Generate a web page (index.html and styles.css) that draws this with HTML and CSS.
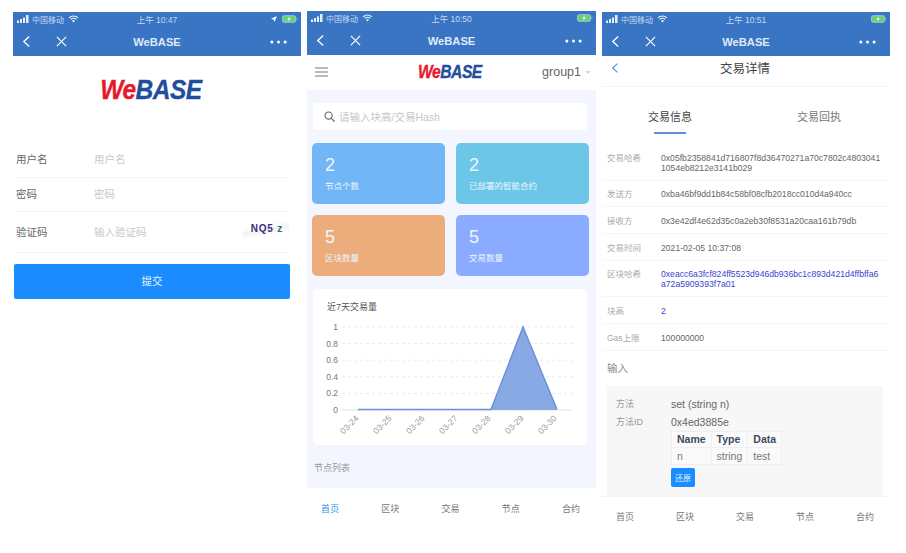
FILE: index.html
```html
<!DOCTYPE html>
<html lang="zh-CN">
<head>
  <meta charset="UTF-8">
  <meta name="viewport" content="width=device-width, initial-scale=1.0">
  <title>WeBASE</title>
  <link rel="stylesheet" href="styles.css">
</head>
<body>
  <svg class="sprite" width="0" height="0">
    <symbol id="signal" viewBox="0 0 13 8"><path d="M0 5.5h2V8H0zM3 4h2v4H3zM6 2.500h2V8H6zM9 0h2.500v8H9z" fill="currentColor"/></symbol>
    <symbol id="wifi" viewBox="0 0 12 9"><path d="M1 3.200a7 7 0 0 1 10 0M2.800 5a4.400 4.400 0 0 1 6.400 0" fill="none" stroke="currentColor" stroke-width="1.300"/><path d="M4.400 6.500a2.200 2.200 0 0 1 3.200 0L6 8.500z" fill="currentColor"/></symbol>
    <symbol id="battery" viewBox="0 0 17 8"><rect x=".5" y=".5" width="14" height="7" rx="2" fill="#62d46f" stroke="#a9c6ea"/><path d="M15.500 3v2a1 1 0 0 0 1-1 1 1 0 0 0-1-1z" fill="#a9c6ea"/><path d="M8.500 1 5.500 4.500h2L6.500 7l3-3.500h-2z" fill="#fff"/></symbol>
    <symbol id="back" viewBox="0 0 10 14"><path d="M8 1.500 2 7l6 5.500" fill="none" stroke="currentColor" stroke-width="1.500"/></symbol>
    <symbol id="close" viewBox="0 0 12 12"><path d="m1 1 10 10M11 1 1 11" fill="none" stroke="currentColor" stroke-width="1.300"/></symbol>
    <symbol id="more" viewBox="0 0 18 4"><circle cx="2" cy="2" r="1.600" fill="currentColor"/><circle cx="9" cy="2" r="1.600" fill="currentColor"/><circle cx="16" cy="2" r="1.600" fill="currentColor"/></symbol>
  </svg>

  <div class="screens">

    <!-- login -->
    <section class="phone phone_low">
      <header class="wx_head">
        <div class="status">
          <svg class="ic_signal"><use href="#signal"/></svg>
          <span class="carrier">中国移动</span>
          <svg class="ic_wifi"><use href="#wifi"/></svg>
          <span class="time">上午 10:47</span>
          <svg class="ic_gps" viewBox="0 0 8 8"><path d="M8 0 0 3.500l3.500 1L4.500 8z" fill="currentColor"/></svg>
          <svg class="ic_battery"><use href="#battery"/></svg>
        </div>
        <div class="wx_nav">
          <svg class="ic_back"><use href="#back"/></svg>
          <svg class="ic_close"><use href="#close"/></svg>
          <span class="wx_title">WeBASE</span>
          <svg class="ic_more"><use href="#more"/></svg>
        </div>
      </header>
      <div class="login_logo"><span class="logo logo_big"><b>We</b>BASE</span></div>
      <div class="login_form">
        <div class="field field_name"><span class="field_label">用户名</span><span class="field_hint">用户名</span></div>
        <div class="field field_pass"><span class="field_label">密码</span><span class="field_hint">密码</span></div>
        <div class="field field_code"><span class="field_label">验证码</span><span class="field_hint">输入验证码</span><span class="captcha">NQ5 <i>z</i></span></div>
      </div>
      <button class="submit">提交</button>
    </section>

    <!-- home -->
    <section class="phone">
      <header class="wx_head">
        <div class="status">
          <svg class="ic_signal"><use href="#signal"/></svg>
          <span class="carrier">中国移动</span>
          <svg class="ic_wifi"><use href="#wifi"/></svg>
          <span class="time">上午 10:50</span>
          <svg class="ic_battery"><use href="#battery"/></svg>
        </div>
        <div class="wx_nav">
          <svg class="ic_back"><use href="#back"/></svg>
          <svg class="ic_close"><use href="#close"/></svg>
          <span class="wx_title">WeBASE</span>
          <svg class="ic_more"><use href="#more"/></svg>
        </div>
      </header>
      <div class="toolbar">
        <svg class="ic_menu" viewBox="0 0 13 10"><path d="M0 1h13M0 5h13M0 9h13" stroke="#777" stroke-width="1.100"/></svg>
        <span class="logo logo_small"><b>We</b>BASE</span>
        <span class="group">group1</span>
        <span class="caret"></span>
      </div>
      <div class="home">
        <div class="search">
          <svg class="ic_search" viewBox="0 0 12 12"><circle cx="5" cy="5" r="3.900" fill="none" stroke="#666" stroke-width="1.200"/><path d="m8 8 3.500 3.500" stroke="#666" stroke-width="1.300"/></svg>
          <span>请输入块高/交易Hash</span>
        </div>
        <div class="stats">
          <div class="stat stat_blue"><strong>2</strong><span>节点个数</span></div>
          <div class="stat stat_cyan"><strong>2</strong><span>已部署的智能合约</span></div>
          <div class="stat stat_orange"><strong>5</strong><span>区块数量</span></div>
          <div class="stat stat_violet"><strong>5</strong><span>交易数量</span></div>
        </div>
        <div class="chart_card">
          <h3>近7天交易量</h3>
          <svg class="chart" viewBox="0 0 274 126" width="274" height="126">
            <g class="grid">
              <path d="M29 8h231M29 24.600h231M29 41.200h231M29 57.800h231M29 74.400h231"/>
            </g>
            <path class="axis" d="M29 91h231"/>
            <g class="y_labels">
              <text x="25" y="11">1</text>
              <text x="25" y="27.600">0.8</text>
              <text x="25" y="44.200">0.6</text>
              <text x="25" y="60.800">0.4</text>
              <text x="25" y="77.400">0.2</text>
              <text x="25" y="94">0</text>
            </g>
            <path class="area" d="M45 91H178L210 8 244 91z"/>
            <path class="line" d="M45 90.500H178L210 8 244 90.500"/>
            <g class="x_labels">
              <text transform="translate(46 100) rotate(-45)">03-24</text>
              <text transform="translate(79 100) rotate(-45)">03-25</text>
              <text transform="translate(112 100) rotate(-45)">03-26</text>
              <text transform="translate(145 100) rotate(-45)">03-27</text>
              <text transform="translate(178 100) rotate(-45)">03-28</text>
              <text transform="translate(211 100) rotate(-45)">03-29</text>
              <text transform="translate(244 100) rotate(-45)">03-30</text>
            </g>
          </svg>
        </div>
        <div class="list_title">节点列表</div>
      </div>
      <nav class="tabbar">
        <span class="tab_on">首页</span><span>区块</span><span>交易</span><span>节点</span><span>合约</span>
      </nav>
    </section>

    <!-- transaction detail -->
    <section class="phone phone_low">
      <header class="wx_head">
        <div class="status">
          <svg class="ic_signal"><use href="#signal"/></svg>
          <span class="carrier">中国移动</span>
          <svg class="ic_wifi"><use href="#wifi"/></svg>
          <span class="time">上午 10:51</span>
          <svg class="ic_battery"><use href="#battery"/></svg>
        </div>
        <div class="wx_nav">
          <svg class="ic_back"><use href="#back"/></svg>
          <svg class="ic_close"><use href="#close"/></svg>
          <span class="wx_title">WeBASE</span>
          <svg class="ic_more"><use href="#more"/></svg>
        </div>
      </header>
      <div class="page_title">
        <svg class="ic_page_back"><use href="#back"/></svg>
        <span>交易详情</span>
      </div>
      <div class="tabs">
        <span class="tabs_item tabs_on">交易信息</span>
        <span class="tabs_item">交易回执</span>
      </div>
      <div class="details">
        <div class="row"><span class="row_key">交易哈希</span><span class="row_val">0x05fb2358841d716807f8d36470271a70c7802c4803041 1054eb8212e3141b029</span></div>
        <div class="row"><span class="row_key">发送方</span><span class="row_val">0xba46bf9dd1b84c58bf08cfb2018cc010d4a940cc</span></div>
        <div class="row"><span class="row_key">接收方</span><span class="row_val">0x3e42df4e62d35c0a2eb30f8531a20caa161b79db</span></div>
        <div class="row"><span class="row_key">交易时间</span><span class="row_val">2021-02-05 10:37:08</span></div>
        <div class="row"><span class="row_key">区块哈希</span><span class="row_val row_link">0xeacc6a3fcf824ff5523d946db936bc1c893d421d4ffbffa6 a72a5909393f7a01</span></div>
        <div class="row"><span class="row_key">块高</span><span class="row_val row_link">2</span></div>
        <div class="row"><span class="row_key">Gas上限</span><span class="row_val">100000000</span></div>
      </div>
      <div class="input_title">输入</div>
      <div class="input_box">
        <div class="input_row"><span class="input_key">方法</span><span class="input_val">set (string n)</span></div>
        <div class="input_row"><span class="input_key">方法ID</span><span class="input_val">0x4ed3885e</span></div>
        <table class="params">
          <tr><th>Name</th><th>Type</th><th>Data</th></tr>
          <tr><td>n</td><td>string</td><td>test</td></tr>
        </table>
        <button class="restore">还原</button>
      </div>
      <nav class="tabbar tabbar_line">
        <span>首页</span><span>区块</span><span>交易</span><span>节点</span><span>合约</span>
      </nav>
    </section>

  </div>
</body>
</html>
```

FILE: styles.css
```css
*{
  box-sizing: border-box;
  font-family: "Liberation Sans", "Noto Sans CJK SC", sans-serif;
}
body{
  margin: 0;
  background: #fff;
  color: #555;
}
.sprite{
  display: block;
  height: 0;
}
.screens{
  display: flex;
  gap: 6px;
  padding: 11px 0 0 13px;
}
.phone{
  width: 288px;
  flex: none;
}
.phone:nth-child(2){
  width: 289px;
}
.phone_low{
  margin-top: 1px;
}

/* wechat header */
.wx_head{
  background: #3a75c4;
  color: #fff;
  height: 44px;
}
.status{
  display: flex;
  align-items: center;
  height: 15px;
  padding: 0 3px 1px 4px;
  position: relative;
  color: #c6d8f0;
  font-size: 8px;
}
.ic_signal{
  width: 13px;
  height: 8px;
  margin-right: 2px;
  color: #e8eff9;
}
.carrier{
  margin-right: 4px;
}
.ic_wifi{
  width: 11px;
  height: 8px;
  color: #e8eff9;
}
.time{
  position: absolute;
  left: 0;
  right: 0;
  text-align: center;
  font-size: 8.500px;
}
.ic_gps{
  width: 6px;
  height: 6px;
  margin-left: auto;
  margin-right: 5px;
  color: #fff;
}
.ic_battery{
  width: 16px;
  height: 8px;
}
.status .ic_wifi + .time + .ic_battery{
  margin-left: auto;
}
.wx_nav{
  display: flex;
  align-items: center;
  height: 29px;
  padding: 0 14px 0 9px;
  position: relative;
}
.ic_back{
  width: 9px;
  height: 13px;
  margin-right: 25px;
}
.ic_close{
  width: 11px;
  height: 11px;
}
.wx_title{
  position: absolute;
  left: 0;
  right: 0;
  text-align: center;
  font-size: 11.200px;
  font-weight: bold;
  color: #dfe9f7;
}
.ic_more{
  width: 17px;
  height: 4px;
  margin-left: auto;
}

/* logo */
.logo{
  display: block;
  font-weight: bold;
  font-style: italic;
  color: #1f4e9c;
  letter-spacing: -.5px;
  -webkit-text-stroke: .3px currentColor;
  transform: scaleY(1.12);
}
.logo b{
  color: #e8192c;
}
.logo_big{
  font-size: 24.500px;
  line-height: 28px;
}
.logo_small{
  font-size: 15.700px;
  line-height: 20px;
}

/* login */
.login_logo{
  display: flex;
  justify-content: center;
  padding: 22px 14px 0 2px;
  height: 86px;
}
.login_form{
  margin: 0 12px 0 2px;
}
.field{
  display: flex;
  align-items: center;
  border-bottom: 1px solid #f4f4f4;
  padding: 0 0 2px 1px;
  font-size: 10.500px;
}
.field_name{
  height: 36px;
}
.field_pass{
  height: 34px;
}
.field_code{
  height: 41px;
}
.field_label{
  width: 78px;
  color: #666;
}
.field_hint{
  color: #c9c9c9;
}
.captcha{
  margin: 0 0 5px auto;
  padding: 4px 6px 4px 8px;
  font-size: 10px;
  line-height: 12px;
  font-weight: bold;
  color: #3f2c80;
  letter-spacing: .8px;
  background: linear-gradient(170deg, #fff 30%, #f1f3f2 55%, #fff 75%);
}
.captcha i{
  font-style: normal;
  color: #2f6a6a;
}
.submit{
  display: block;
  width: 276px;
  height: 35px;
  margin: 11px 0 0 1px;
  padding: 0 0 2px;
  border: 0;
  border-radius: 2px;
  background: #1a8cff;
  color: #e8f3ff;
  font-size: 10.500px;
}

/* home */
.toolbar{
  display: flex;
  align-items: center;
  height: 35px;
  padding: 0 5px 1px 8px;
  position: relative;
}
.ic_menu{
  width: 13px;
  height: 10px;
}
.toolbar .logo{
  position: absolute;
  left: 111px;
}
.group{
  margin-left: auto;
  font-size: 12.500px;
  color: #666;
}
.caret{
  width: 0;
  height: 0;
  margin-left: 4px;
  border: 3px solid transparent;
  border-top-color: #d8d8d8;
  border-bottom: 0;
}
.home{
  background: #f3f6fe;
  height: 398px;
  padding: 13px 9px 0 6px;
  overflow: hidden;
}
.search{
  display: flex;
  align-items: center;
  height: 27px;
  padding: 0 0 1px 11px;
  gap: 4px;
  background: #fff;
  border-radius: 3px;
  font-size: 10.500px;
  color: #c6c6c6;
}
.ic_search{
  width: 11px;
  height: 11px;
}
.stats{
  display: grid;
  grid-template-columns: 133px 133px;
  gap: 11px;
  margin: 13px -2px 0 -1px;
}
.stat{
  display: flex;
  flex-direction: column;
  height: 61px;
  padding: 11px 13px 0;
  border-radius: 5px;
  color: #eef6ff;
}
.stat strong{
  font-size: 18px;
  font-weight: normal;
  line-height: 22px;
}
.stat span{
  margin-top: 4px;
  font-size: 8.500px;
  line-height: 12px;
}
.stat_blue{
  background: #72b6f6;
}
.stat_cyan{
  background: #6cc6e7;
}
.stat_orange{
  background: #ecac7c;
}
.stat_violet{
  background: #8aabff;
}
.chart_card{
  height: 156px;
  margin-top: 13px;
  background: #fff;
  border-radius: 5px;
}
.chart_card h3{
  margin: 0;
  height: 30px;
  padding: 12px 0 0 14px;
  font-size: 9px;
  line-height: 12px;
  font-weight: normal;
  color: #555;
}
.chart{
  display: block;
}
.grid path{
  stroke: #ececec;
  stroke-width: 1;
  stroke-dasharray: 3 3;
  fill: none;
}
.axis{
  stroke: #e2e2e2;
  fill: none;
}
.area{
  fill: #88a9e3;
}
.line{
  fill: none;
  stroke: #6a90dc;
  stroke-width: 1.500;
}
.y_labels text{
  font-size: 8.500px;
  fill: #777;
  text-anchor: end;
}
.x_labels text{
  font-size: 8.500px;
  fill: #999;
  text-anchor: end;
}
.list_title{
  margin-top: 17px;
  padding-left: 1px;
  font-size: 9px;
  line-height: 12px;
  color: #999;
}
.tabbar{
  display: flex;
  justify-content: space-between;
  align-items: center;
  height: 40px;
  padding: 0 16px 0 14px;
  font-size: 9px;
  color: #777;
}
.tab_on{
  color: #2b92e8;
}
.tabbar_line{
  border-top: 1px solid #f3f3f3;
}

/* transaction detail */
.page_title{
  display: flex;
  align-items: center;
  justify-content: center;
  position: relative;
  height: 31px;
  padding: 0 2px 8px 0;
  border-bottom: 1px solid #f4f4f4;
  font-size: 12.500px;
  color: #444;
}
.ic_page_back{
  position: absolute;
  left: 9px;
  top: 6px;
  width: 8px;
  height: 12px;
  color: #3f97ea;
}
.tabs{
  display: flex;
  height: 47px;
  margin-bottom: 10px;
  font-size: 11px;
  color: #777;
}
.tabs_item{
  flex: none;
  width: 148px;
  margin-left: 7px;
  padding-top: 22px;
  line-height: 16px;
  text-align: center;
}
.tabs_on{
  position: relative;
  color: #444;
}
.tabs_on::after{
  content: "";
  position: absolute;
  left: 52px;
  top: 45px;
  width: 32px;
  height: 2px;
  background: #5f8fdc;
}
.tabs_item:first-child{
  width: 136px;
  margin-left: 0;
}
.row{
  display: flex;
  padding: 8.700px 0 6.970px;
  border-bottom: 1px solid #f6f6f6;
  font-size: 8.650px;
  line-height: 10px;
}
.row_key{
  flex: none;
  width: 59px;
  padding-left: 5px;
  font-size: 8.500px;
  color: #aaa;
}
.row_val{
  width: 225px;
  color: #666;
  word-break: break-word;
}
.row_link{
  color: #3a3fd0;
}
.input_title{
  height: 35px;
  padding: 11px 0 0 5px;
  font-size: 10.500px;
  line-height: 13px;
  color: #888;
}
.input_box{
  width: 276px;
  height: 110px;
  margin-left: 5px;
  padding-top: 9px;
  background: #f7f7f8;
}
.input_row{
  display: flex;
  height: 18px;
  align-items: center;
}
.input_key{
  width: 64px;
  padding-left: 9px;
  font-size: 9px;
  color: #999;
}
.input_val{
  font-size: 10.500px;
  color: #666;
}
.params{
  margin-left: 64px;
  border-collapse: collapse;
  font-size: 10.500px;
  line-height: 12px;
}
.params th,
.params td{
  height: 16.500px;
  padding: 0 5px;
  border: 1px solid #eeeef4;
  text-align: left;
  background: #fafafb;
}
.params th{
  color: #3c4a60;
}
.params td{
  color: #777;
}
.restore{
  display: block;
  width: 24px;
  height: 19px;
  margin: 3px 0 0 64px;
  padding: 0;
  border: 0;
  border-radius: 2px;
  background: #1a8cff;
  color: #e8f3ff;
  font-size: 8px;
}
```
